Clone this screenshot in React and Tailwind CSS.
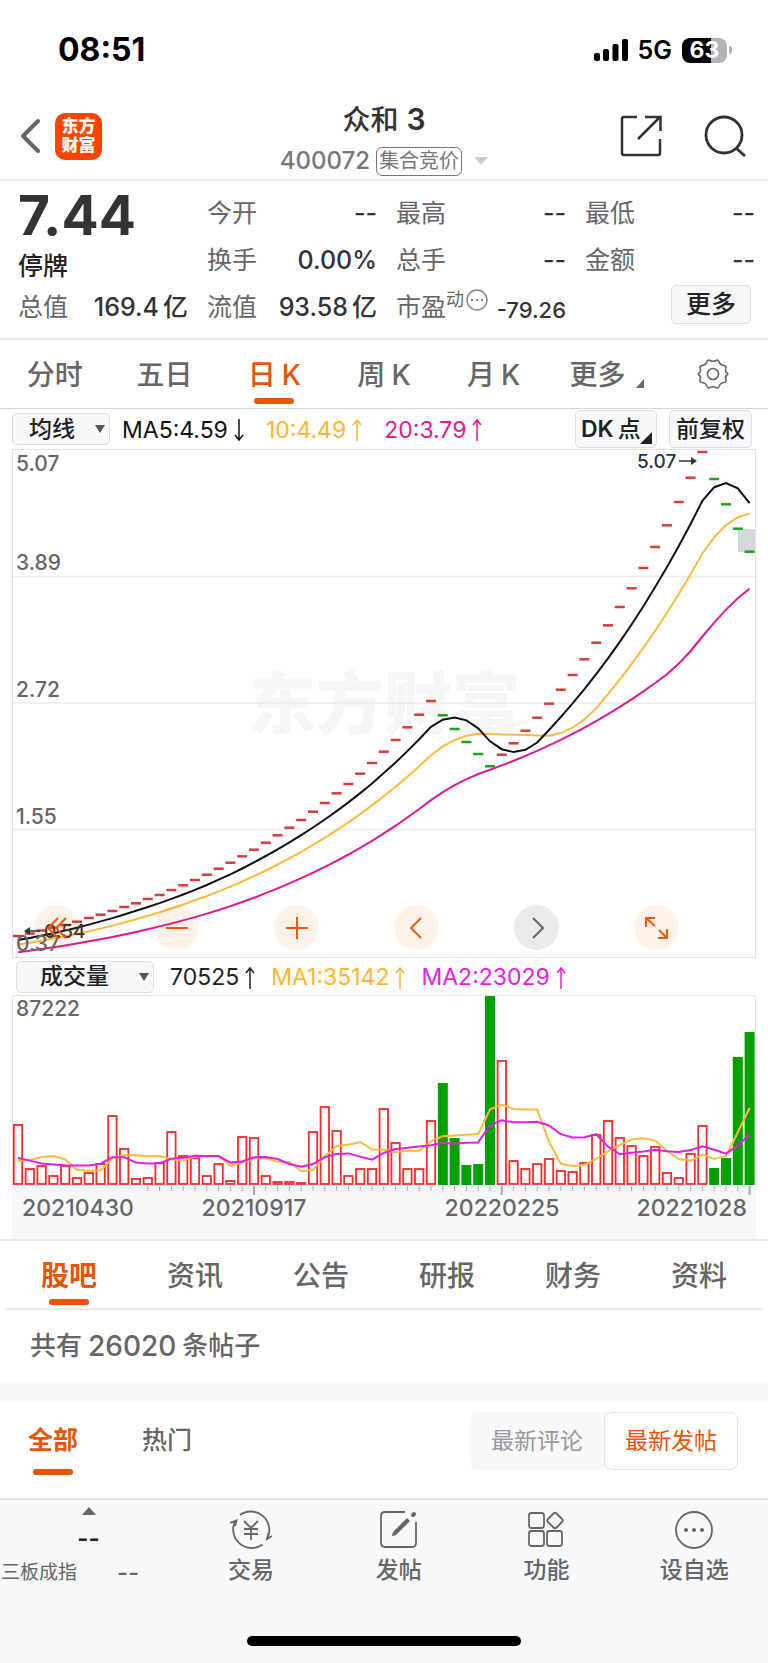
import React, { useState } from 'react';
import clsx from 'clsx';

const PANE_WIDTH = 744;
const BAR_STEP = 11.8;
const barX = (i) => 6 + i * BAR_STEP;

// Closing prices as offsets from the top of the price pane
const closes = [
  487, 484.5, 481.5, 478.7, 476, 472.7, 469, 465.7, 462, 458, 454.3, 450, 446, 441, 436.3, 431,
  425.7, 419.7, 413.7, 407.3, 400.7, 393.7, 386.3, 378.7, 371, 362.7, 354, 344.3, 335, 324.7, 314,
  302.7, 291, 278.3, 265.7, 252, 266.3, 280, 293, 305, 317.3, 305.7, 294.3, 281.7, 268.7, 254.7,
  240.7, 226, 210.3, 193.7, 176.3, 158, 139.3, 119, 98, 76.3, 53, 28.7, 3, 30, 55.3, 79.7, 102.7,
];

// Bars before the visible range, needed for the averages
const earlierCloses = Array.from({ length: 19 }, (_, n) => {
  const k = 19 - n;
  return 487 + 2.1 * k - 0.03 * k * k;
});

const volumes = [
  60, 16, 19, 9, 19, 7, 12, 21, 69, 36, 6, 7, 22, 53, 29, 27, 9, 21, 4, 48, 47, 9, 3, 3, 2, 53, 78,
  54, 9, 16, 16, 76, 42, 16, 16, 64, 101, 46, 19, 20, 188, 124, 24, 16, 21, 26, 14, 13, 22, 50, 64,
  47, 39, 29, 38, 12, 7, 31, 59, 16, 26, 127, 152,
];
const earlierVolumes = [42, 48, 18, 28, 9, 11, 4, 4, 36];

const isDown = (i) => (i >= 36 && i <= 40) || i >= 59;

function averageLine(earlier, visible, size, toY = (v) => v) {
  const all = [...earlier, ...visible];
  return visible
    .map((_, i) => {
      const end = earlier.length + i + 1;
      const part = all.slice(end - size, end);
      const mean = part.reduce((a, b) => a + b, 0) / size;
      return `${barX(i).toFixed(1)},${toY(mean).toFixed(1)}`;
    })
    .join(' ');
}

const quotes = [
  { label: '今开', value: '--' },
  { label: '最高', value: '--' },
  { label: '最低', value: '--' },
  { label: '换手', value: '0.00%' },
  { label: '总手', value: '--' },
  { label: '金额', value: '--' },
];

function StatusBar() {
  return (
    <div className="flex h-[98px] items-center justify-between pt-[2px] pr-9 pl-[58px] text-black">
      <span className="text-[32px] leading-none font-bold">08:51</span>
      <div className="flex items-center">
        <svg width="34" height="24" viewBox="0 0 34 24" aria-hidden="true">
          <rect x="0" y="15" width="6" height="8" rx="2" />
          <rect x="9" y="11" width="6" height="12" rx="2" />
          <rect x="18.500" y="6" width="6" height="17" rx="2" />
          <rect x="28" y="1" width="6" height="22" rx="2" />
        </svg>
        <span className="ml-[10px] text-[25px] leading-none font-semibold">5G</span>
        <span className="ml-[10px] flex h-[25px] w-[45px] items-center justify-center rounded-lg bg-linear-to-r from-black from-64% to-[#b3b3b3] to-64% text-[23px] leading-none font-bold text-white">
          63
        </span>
        <span className="ml-[2px] h-2 w-[3px] rounded-r-full bg-[#b3b3b3]" />
      </div>
    </div>
  );
}

function Header() {
  return (
    <header className="grid h-[83px] grid-cols-[1fr_auto_1fr] items-center border-b-2 border-[#ebebeb] text-[#333]">
      <div className="flex items-center pb-[6px] pl-[20px]">
        <button type="button" aria-label="返回">
          <svg width="22" height="36" viewBox="0 0 22 36" fill="none" stroke="#666" strokeWidth="4" strokeLinecap="round" strokeLinejoin="round">
            <path d="M18 3 3 18l15 15" />
          </svg>
        </button>
        <div className="ml-[13px] flex h-[47px] w-[47px] flex-col items-center justify-center rounded-[10px] bg-[#ff4400] text-[17px] leading-[19px] font-black text-white">
          <span>东方</span>
          <span>财富</span>
        </div>
      </div>
      <div className="flex flex-col items-center pt-[3px]">
        <h1 className="text-[28px] leading-[38px] font-medium">
          众和<span className="ml-2 text-[30px] leading-none font-semibold">3</span>
        </h1>
        <button type="button" className="mt-[3px] flex h-[38px] items-center text-[#777]">
          <span className="text-2xl font-medium">400072</span>
          <span className="ml-[6px] flex h-[29px] items-center rounded-md border border-[#777] px-[2px] text-xl leading-none">集合竞价</span>
          <svg className="ml-3" width="14" height="8" viewBox="0 0 14 8" fill="#ccc">
            <path d="M0 0h14L7 8z" />
          </svg>
        </button>
      </div>
      <div className="flex items-center justify-end pr-[22px] pb-[6px]">
        <button type="button" aria-label="分享">
          <svg width="42" height="42" viewBox="0 0 42 42" fill="none" stroke="#333" strokeWidth="2.500">
            <path d="M17 2H4Q2 2 2 4v34q0 2 2 2h34q2 0 2-2V24M25 2h15.500v14M40 2 18 24" />
          </svg>
        </button>
        <button type="button" aria-label="搜索" className="ml-[42px]">
          <svg width="42" height="42" viewBox="0 0 42 42" fill="none" stroke="#333" strokeWidth="2.800">
            <circle cx="20" cy="20" r="18" />
            <path d="m32 33 9 8" />
          </svg>
        </button>
      </div>
    </header>
  );
}

function Quote({ label, value }) {
  return (
    <div className="flex items-center justify-between">
      <span className="text-[#666]">{label}</span>
      <span className="font-medium">{value}</span>
    </div>
  );
}

function QuotePanel() {
  return (
    <section className="border-b-2 border-[#ebebeb] pt-[9px] pr-[13px] pb-[7px] pl-[18px] text-[25px] leading-none text-[#333]">
      <div className="grid auto-rows-[47px] grid-cols-4 gap-x-[19px]">
        <div className="row-span-2 flex flex-col">
          <strong className="text-[55px] leading-[50px] font-bold">7.44</strong>
          <span className="mt-[14px] font-medium text-[#222]">停牌</span>
        </div>
        {quotes.map((quote) => (
          <Quote key={quote.label} {...quote} />
        ))}
        <Quote label="总值" value={<>169.4<span className="ml-1">亿</span></>} />
        <Quote label="流值" value={<>93.58<span className="ml-1">亿</span></>} />
        <div className="flex items-center justify-between">
          <span className="flex items-center text-[#666]">
            市盈
            <span className="mb-4 flex items-center text-lg leading-none">
              动
              <svg className="ml-[2px]" width="22" height="22" viewBox="0 0 22 22" fill="none" stroke="#888" strokeWidth="1.500">
                <circle cx="11" cy="11" r="10" />
                <path d="M5 11h2M10 11h2M15 11h2" strokeWidth="2" />
              </svg>
            </span>
          </span>
          <span className="pt-1 text-[22px] font-medium">-79.26</span>
        </div>
        <div className="flex justify-end pr-1">
          <button type="button" className="mt-px h-[39px] w-20 rounded-[5px] border border-[#dcdee3] bg-[#f7f8fa] font-medium text-[#222]">
            更多
          </button>
        </div>
      </div>
    </section>
  );
}

function PeriodTabs() {
  const [active, setActive] = useState('日K');
  const tabs = ['分时', '五日', '日K', '周K', '月K', '更多'];

  return (
    <nav className="grid h-[69px] grid-cols-7 border-b border-[#d5d7dc]">
      {tabs.map((tab) => (
        <button
          key={tab}
          type="button"
          onClick={() => setActive(tab)}
          className={clsx(
            'relative flex items-center justify-center pt-px text-[28px] leading-none font-medium',
            tab === active ? 'text-[#ea5504]' : 'text-[#666]',
            tab === '更多' && 'pr-3'
          )}
        >
          {tab.replace('K', '')}
          {tab.endsWith('K') && <span className="ml-[6px]">K</span>}
          {tab === '更多' && (
            <svg className="absolute right-[14px] bottom-5" width="8" height="9" viewBox="0 0 8 9" fill="#666">
              <path d="M8 0v9H0z" />
            </svg>
          )}
          {tab === active && <span className="absolute bottom-1 h-[6px] w-10 rounded-full bg-[#ea5504]" />}
        </button>
      ))}
      <button type="button" aria-label="设置" className="flex items-center justify-center">
        <svg width="32" height="32" viewBox="0 0 32 32" fill="none" stroke="#666" strokeWidth="1.600" strokeLinejoin="round">
          <path d="M10 3.500Q11 1.500 13 2.500Q16 4 19 2.500Q21 1.500 22 3.500Q23 7 27 7.500Q29.500 8 29 10.500Q27.500 14 30 15Q31.500 16 30 17Q27.500 18.500 29 21.500Q29.500 24 27 24.500Q23 25 22 28.500Q21 30.500 19 29.500Q16 28 13 29.500Q11 30.500 10 28.500Q9 25 5 24.500Q2.500 24 3 21.500Q4.500 18.500 2 17Q.5 16 2 15Q4.500 14 3 10.500Q2.500 8 5 7.500Q9 7 10 3.500z" />
          <circle cx="16" cy="16" r="5.500" />
        </svg>
      </button>
    </nav>
  );
}

function Arrow({ down }) {
  return (
    <svg className={clsx('ml-[6px]', down && 'rotate-180')} width="10" height="24" viewBox="0 0 10 24" fill="none" stroke="currentColor" strokeWidth="1.500" aria-hidden="true">
      <path d="M5 23V2M1 7l4-5 4 5" />
    </svg>
  );
}

function Reading({ children, down, className }) {
  return (
    <span className={clsx('flex items-center pt-[2px] text-[23px] leading-none whitespace-nowrap', className)}>
      {children}
      <Arrow down={down} />
    </span>
  );
}

function Picker({ label, options, className }) {
  return (
    <span className="relative flex">
      <select
        aria-label={label}
        className={clsx(
          'h-8 appearance-none rounded-[5px] border border-[#dcdee3] bg-[#f7f8fa] text-[23px] leading-none font-medium text-[#222]',
          className
        )}
      >
        {options.map((option) => (
          <option key={option}>{option}</option>
        ))}
      </select>
      <svg className="pointer-events-none absolute top-3 right-[5px]" width="10" height="8" viewBox="0 0 10 8" fill="#555">
        <path d="M0 0h10L5 8z" />
      </svg>
    </span>
  );
}

function RoundButton({ label, muted, children }) {
  return (
    <button
      type="button"
      aria-label={label}
      className={clsx(
        'flex h-[45px] w-[45px] items-center justify-center rounded-full',
        muted ? 'bg-black/8 text-[#666]' : 'bg-[#ff5500]/8 text-[#f2590c]'
      )}
    >
      <svg width="24" height="24" viewBox="0 0 24 24" fill="none" stroke="currentColor" strokeWidth="2">
        {children}
      </svg>
    </button>
  );
}

function PriceChart() {
  return (
    <div className="relative">
      <svg className="block h-auto w-full" viewBox={`0 0 ${PANE_WIDTH} 509`} fill="none">
        <text x="372" y="280" textAnchor="middle" fontSize="68" fontWeight="900" fill="#f6f6f6">东方财富</text>
        <path d="M0 127.500h744M0 254h744M0 380.500h744" stroke="#e9ebf0" strokeWidth="1.500" />
        <rect x=".5" y=".5" width="743" height="508" stroke="#e3e4e8" />
        <rect x="726" y="80" width="17" height="23" fill="#d4d7dc" />
        {closes.map((y, i) => (
          <path key={i} d={`M${barX(i) - 5} ${y}h10`} stroke={isDown(i) ? '#1aa51a' : '#d93a3a'} strokeWidth="2.500" />
        ))}
        <polyline points={averageLine(earlierCloses, closes, 20)} stroke="#e3178d" strokeWidth="2" />
        <polyline points={averageLine(earlierCloses, closes, 10)} stroke="#ffbc3c" strokeWidth="2" />
        <polyline points={averageLine(earlierCloses, closes, 5)} stroke="#111" strokeWidth="2" />
        <g fill="#666" fontSize="21" fontWeight="500">
          <text x="4" y="22">5.07</text>
          <text x="4" y="121">3.89</text>
          <text x="4" y="248">2.72</text>
          <text x="4" y="375">1.55</text>
          <text x="4" y="502">0.37</text>
        </g>
        <g fill="#333" fontSize="19" fontWeight="500">
          <text x="625" y="19">5.07</text>
          <text x="32" y="489">0.54</text>
        </g>
        <path d="M667 12h12M28 482H16" stroke="#333" strokeWidth="1.500" />
        <path d="m679 8 6 4-6 4zM18 478l-6 4 6 4z" fill="#333" />
      </svg>
      <div className="absolute bottom-2 left-[22px] flex gap-[75px]">
        <RoundButton label="最早">
          <path d="M13 2 3 12l10 10M21 2 11 12l10 10" />
        </RoundButton>
        <RoundButton label="缩小">
          <path d="M1 12h22" />
        </RoundButton>
        <RoundButton label="放大">
          <path d="M1 12h22M12 1v22" />
        </RoundButton>
        <RoundButton label="左移">
          <path d="M16 2 6 12l10 10" />
        </RoundButton>
        <RoundButton label="右移" muted>
          <path d="m8 2 10 10L8 22" />
        </RoundButton>
        <RoundButton label="全屏">
          <path d="M1 11V2h9M1 2l9 8M22 13v9h-9M22 22l-8-8" />
        </RoundButton>
      </div>
    </div>
  );
}

function VolumeChart() {
  const base = 189;
  const toY = (v) => base - v;

  return (
    <svg className="block h-auto w-full" viewBox={`0 0 ${PANE_WIDTH} 244`} fill="none">
      <rect x="0" y="190" width="744" height="54" fill="#f7f8fa" />
      <path d="M.5 190V.5h743V190" stroke="#e3e4e8" />
      <text x="4" y="21" fill="#666" fontSize="21" fontWeight="500">87222</text>
      {volumes.map((v, i) =>
        isDown(i) ? (
          <rect key={i} x={barX(i) - 5} y={base - v} width="10" height={v + 1} fill="#00a000" />
        ) : (
          <rect key={i} x={barX(i) - 4.2} y={base - v + 1} width="8.400" height={Math.max(v - 1, 1)} stroke="#f52b2b" strokeWidth="1.800" />
        )
      )}
      <polyline points={averageLine(earlierVolumes, volumes, 5, toY)} stroke="#ffbc3c" strokeWidth="2" />
      <polyline points={averageLine(earlierVolumes, volumes, 10, toY)} stroke="#e61ce6" strokeWidth="2" />
      {volumes.map((_, i) => {
        if (i < 11) return null;
        const major = i === 20 || i === 41 || i === 62;
        return <path key={i} d={`M${barX(i)} 191v${major ? 9 : 5}`} stroke="#aaa" strokeWidth={major ? 2 : 1} />;
      })}
      <g fill="#666" fontSize="23" fontWeight="500">
        <text x="10" y="221">20210430</text>
        <text x="242" y="221" textAnchor="middle">20210917</text>
        <text x="490" y="221" textAnchor="middle">20220225</text>
        <text x="735" y="221" textAnchor="end">20221028</text>
      </g>
    </svg>
  );
}

function ChartPanel() {
  return (
    <section className="border-b-2 border-[#ebebeb] pr-3 pl-3">
      <div className="flex h-10 items-center">
        <Picker label="主图指标" options={['均线', 'BOLL']} className="w-[98px] pl-4" />
        <Reading down className="ml-3 text-[#111]">MA5:4.59</Reading>
        <Reading className="ml-[22px] text-[#ffb52e]">10:4.49</Reading>
        <Reading className="ml-[22px] text-[#e3178d]">20:3.79</Reading>
        <div className="ml-auto flex gap-3 pr-1 text-[23px] leading-none font-medium text-[#222]">
          <button type="button" className="relative flex h-[38px] w-[82px] items-center rounded-[5px] border border-[#dcdee3] bg-[#f7f8fa] pl-[5px]">
            <span className="font-semibold">DK</span>
            <span className="ml-1">点</span>
            <svg className="absolute right-1 bottom-[3px]" width="12" height="12" viewBox="0 0 12 12" fill="#222">
              <path d="M12 0v12H0z" />
            </svg>
          </button>
          <button type="button" className="h-[38px] w-[83px] rounded-[5px] border border-[#dcdee3] bg-[#f7f8fa]">
            前复权
          </button>
        </div>
      </div>
      <PriceChart />
      <div className="flex h-[37px] items-center pl-1">
        <Picker label="副图指标" options={['成交量', 'MACD']} className="w-[138px] pl-[23px]" />
        <Reading className="ml-4 text-[#222]">70525</Reading>
        <Reading className="ml-4 text-[#ffb52e]">MA1:35142</Reading>
        <Reading className="ml-4 text-[#e61ce6]">MA2:23029</Reading>
      </div>
      <VolumeChart />
    </section>
  );
}

function InfoTabs() {
  const [active, setActive] = useState('股吧');

  return (
    <nav className="mx-[6px] grid h-[69px] grid-cols-6 border-b-2 border-[#ebebeb]">
      {['股吧', '资讯', '公告', '研报', '财务', '资料'].map((tab) => (
        <button
          key={tab}
          type="button"
          onClick={() => setActive(tab)}
          className={clsx(
            'relative flex items-center justify-center pt-[3px] text-[28px] leading-none',
            tab === active ? 'font-bold text-[#ea5504]' : 'font-medium text-[#666]'
          )}
        >
          {tab}
          {tab === active && <span className="absolute bottom-[3px] h-[6px] w-10 rounded-full bg-[#ea5504]" />}
        </button>
      ))}
    </nav>
  );
}

function PostFilter() {
  const [newest, setNewest] = useState('最新发帖');

  return (
    <section className="box-content flex h-24 items-start justify-between border-t-[20px] border-[#f7f8fa] pr-[30px] pl-7">
      <div className="flex h-[73px] gap-16 pt-[5px] text-[25px] leading-none">
        <button type="button" className="relative flex items-center justify-center pb-px font-bold text-[#ea5504]">
          全部
          <span className="absolute bottom-0 h-[6px] w-10 rounded-full bg-[#ea5504]" />
        </button>
        <button type="button" className="flex items-center pb-px font-medium text-[#666]">热门</button>
      </div>
      <div className="mt-[10px] flex h-[58px] rounded-lg bg-[#f7f8fa] text-[23px] leading-none">
        {['最新评论', '最新发帖'].map((name) => (
          <button
            key={name}
            type="button"
            onClick={() => setNewest(name)}
            className={clsx(
              'w-[134px]',
              name === newest ? 'rounded-lg border border-[#e3e4e8] bg-white text-[#ea5504]' : 'text-[#999]'
            )}
          >
            {name}
          </button>
        ))}
      </div>
    </section>
  );
}

const actions = [
  {
    label: '交易',
    icon: (
      <>
        <path d="M10 6A18.500 18.500 0 0 1 37.500 29M32.500 35.500A18.500 18.500 0 0 1 5 12.500" />
        <path d="m0 14 6.500-2.500L5 17M42 27l-5 3 1.500-6" />
        <path d="m14 12 7 7 7-7M21 19v12M14 20h14M14 25h14" />
      </>
    ),
  },
  {
    label: '发帖',
    icon: (
      <>
        <path d="M27 3H7Q3 3 3 7v27q0 4 4 4h27q4 0 4-4V13" />
        <path d="M14 27q0-3 2-5L29 9l3 3-13 13q-2 2-5 2z" fill="currentColor" stroke="none" />
        <path d="m35 6 1-1" strokeWidth="4" strokeLinecap="round" />
      </>
    ),
  },
  {
    label: '功能',
    icon: (
      <>
        <rect x="4" y="4" width="15" height="15" rx="2.500" />
        <rect x="4" y="22" width="15" height="15" rx="2.500" />
        <rect x="22" y="22" width="15" height="15" rx="2.500" />
        <path d="M28.500 4.500q1.500-1.500 3 0l5.500 5.500q1.500 1.500 0 3l-5.500 5.500q-1.500 1.500-3 0L23 13q-1.500-1.500 0-3z" />
      </>
    ),
  },
  {
    label: '设自选',
    icon: (
      <>
        <circle cx="21" cy="21" r="18" />
        <g fill="currentColor" stroke="none">
          <circle cx="13" cy="21" r="2" />
          <circle cx="21" cy="21" r="2" />
          <circle cx="29" cy="21" r="2" />
        </g>
      </>
    ),
  },
];

function BottomBar() {
  return (
    <footer className="border-t-2 border-[#dfe0e3] bg-[#f7f8fa] pb-[17px] text-[#666]">
      <div className="flex h-[118px]">
        <button type="button" className="flex w-[177px] flex-col items-center pt-[7px]">
          <svg width="14" height="8" viewBox="0 0 14 8" fill="#666">
            <path d="M0 8h14L7 0z" />
          </svg>
          <span className="mt-3 text-2xl leading-6 font-semibold text-[#222]">--</span>
          <span className="mt-[10px] flex w-full items-center pl-px text-[19px] leading-6">
            三板成指
            <span className="ml-10 text-2xl leading-6 font-medium">--</span>
          </span>
        </button>
        {actions.map(({ label, icon }) => (
          <button key={label} type="button" className="flex flex-1 flex-col items-center pt-[9px] text-[23px] leading-none">
            <svg width="42" height="42" viewBox="0 0 42 42" fill="none" stroke="currentColor" strokeWidth="1.800">
              {icon}
            </svg>
            <span className="mt-2 font-medium">{label}</span>
          </button>
        ))}
      </div>
      <div className="mx-auto mt-[18px] h-[10px] w-[274px] rounded-full bg-black" />
    </footer>
  );
}

export default function App() {
  return (
    <div className="bg-white font-['Inter','Noto_Sans_CJK_SC',sans-serif]">
      <StatusBar />
      <Header />
      <QuotePanel />
      <PeriodTabs />
      <ChartPanel />
      <InfoTabs />
      <p className="flex h-[72px] items-center pl-[30px] text-[26px] leading-none font-medium text-[#666]">
        共有<span className="mx-[6px] text-[28px] leading-none">26020</span>条帖子
      </p>
      <PostFilter />
      <BottomBar />
    </div>
  );
}
